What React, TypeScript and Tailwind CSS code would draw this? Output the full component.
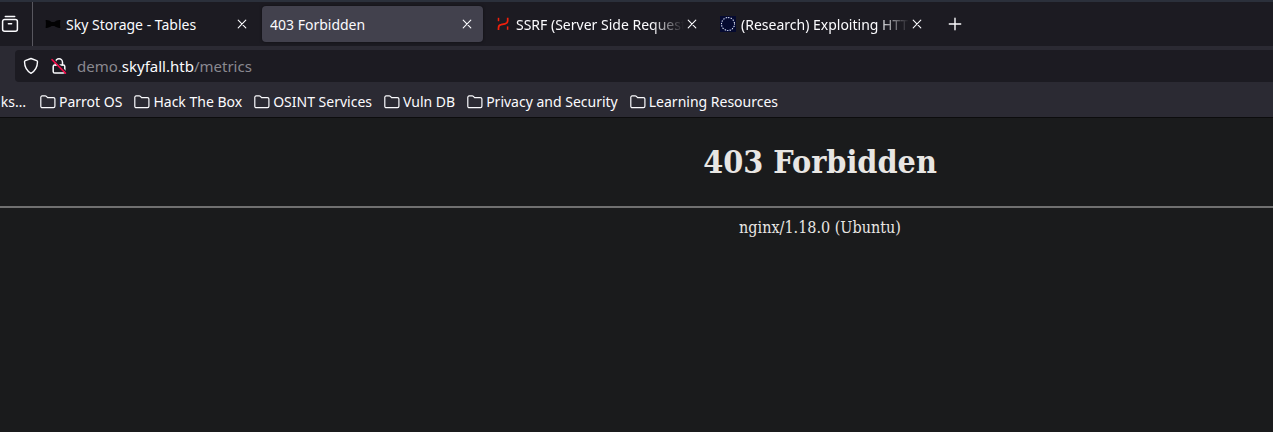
import React from 'react';

const stroke = {
  fill: 'none',
  stroke: 'currentColor',
  strokeLinecap: 'round',
  strokeLinejoin: 'round',
} as const;

function CloseIcon() {
  return (
    <svg viewBox="0 0 16 16" className="size-4" {...stroke} strokeWidth="1.1" aria-hidden="true">
      <path d="M4.2 4.2l7.6 7.6M11.8 4.2l-7.6 7.6" />
    </svg>
  );
}

function RecentIcon() {
  return (
    <svg viewBox="0 0 18 18" className="size-[18px]" {...stroke} strokeWidth="1.5" aria-hidden="true">
      <path d="M4.3 1.6h9.4" />
      <path d="M3.6 4.4h10.8a2 2 0 0 1 2 2v7.8a2 2 0 0 1-2 2H3.6a2 2 0 0 1-2-2V6.4a2 2 0 0 1 2-2z" />
      <path d="M7.4 8.7h3.2" />
    </svg>
  );
}

function BowTie() {
  return (
    <svg viewBox="0 0 16 16" className="size-4" fill="#020203" aria-hidden="true">
      <path d="M.6 4.3C2 3.6 5 4.8 6.600 6h2.800C11 4.800 14 3.600 15.400 4.300c-.4 2.300-.4 5.100 0 7.400-1.400.7-4.400-.5-6-1.700H6.600c-1.600 1.200-4.600 2.400-6 1.700.4-2.300.4-5.100 0-7.400z" />
    </svg>
  );
}

function RedMark() {
  return (
    <svg viewBox="0 0 16 16" className="size-4" fill="none" stroke="#f0200c" aria-hidden="true">
      <path d="M3.5 1.8v3.400" strokeWidth="1.500" />
      <path
        d="M3.500 14v-2c0-2 .8-3.100 2.600-3.400l3.800-.8c1.900-.4 2.800-1.500 2.800-3.300V1.800"
        strokeWidth="1.700"
      />
      <path d="M12.600 13.800v-3.400" strokeWidth="1.500" />
    </svg>
  );
}

function StarCircle() {
  return (
    <svg viewBox="0 0 16 16" className="size-4" aria-hidden="true">
      <rect width="16" height="16" fill="#050a30" />
      <circle cx="8" cy="8" r="6.500" fill="none" stroke="#26336c" strokeWidth="1" />
      <circle
        cx="8"
        cy="8"
        r="6.500"
        fill="none"
        stroke="#ffffff"
        strokeWidth="1.200"
        strokeLinecap="round"
        strokeDasharray="0.010 2.543"
      />
    </svg>
  );
}

function ShieldIcon() {
  return (
    <svg viewBox="0 0 16 18" className="h-[18px] w-4" {...stroke} strokeWidth="1.4" aria-hidden="true">
      <path d="M8 1.500l5.700 2.200c.5.200.8.600.8 1.100-.1 5.200-2 9-6.500 11.500C3.500 13.800 1.600 10 1.500 4.800c0-.5.3-.9.800-1.100z" />
    </svg>
  );
}

function InsecureLockIcon() {
  return (
    <svg viewBox="0 0 16 18" className="h-[18px] w-4" {...stroke} strokeWidth="1.5" aria-hidden="true">
      <path d="M4.500 8V5.200a3.500 3.500 0 0 1 7 0V8" />
      <path d="M3.800 8h8.400a1.600 1.600 0 0 1 1.600 1.600v4.800a1.600 1.600 0 0 1-1.600 1.600H3.800a1.600 1.600 0 0 1-1.600-1.600V9.600A1.600 1.600 0 0 1 3.800 8z" />
      <path d="M2.300 2.200l13 13" stroke="#1c1b22" strokeWidth="1.500" />
      <path d="M1 2.600l13.500 13.500" stroke="#f00a48" strokeWidth="1.500" />
    </svg>
  );
}

function FolderIcon() {
  return (
    <svg viewBox="0 0 16 16" className="size-4 shrink-0" {...stroke} strokeWidth="1.2" aria-hidden="true">
      <path d="M.8 12.300V3.300c0-.8.6-1.400 1.400-1.400h3c.5 0 .9.200 1.200.5l1.200 1.300h5.900c.8 0 1.400.6 1.400 1.400v7.200c0 .8-.6 1.400-1.400 1.400H2.200c-.8 0-1.400-.6-1.400-1.400z" />
    </svg>
  );
}

type TabInfo = { title: string; icon?: React.ReactNode; active?: boolean; fade?: boolean };

const tabs: TabInfo[] = [
  { title: 'Sky Storage - Tables', icon: <BowTie /> },
  { title: '403 Forbidden', active: true },
  { title: 'SSRF (Server Side Request', icon: <RedMark />, fade: true },
  { title: '(Research) Exploiting HTT', icon: <StarCircle />, fade: true },
];

const folders = [
  'Parrot OS',
  'Hack The Box',
  'OSINT Services',
  'Vuln DB',
  'Privacy and Security',
  'Learning Resources',
];

function Tab({ title, icon, active, fade }: TabInfo) {
  return (
    <div
      className={`flex h-9 w-[221px] shrink-0 items-center rounded px-2 ${active ? 'bg-[#42414d] shadow-[0_0_3px_rgba(0,0,0,0.5)]' : ''}`}
    >
      <button
        type="button"
        role="tab"
        aria-selected={!!active}
        className="flex min-w-0 flex-1 items-center gap-[5px] text-left"
      >
        {icon && <span className="shrink-0">{icon}</span>}
        <span
          className={`min-w-0 flex-1 overflow-hidden pt-0.5 whitespace-nowrap ${fade ? '[mask-image:linear-gradient(to_left,transparent,black_32px)]' : ''}`}
        >
          {title}
        </span>
      </button>
      <button type="button" aria-label={`Close ${title}`} className="shrink-0">
        <CloseIcon />
      </button>
    </div>
  );
}

export default function App() {
  return (
    <div className="flex min-h-screen flex-col overflow-hidden bg-[#1a1b1c] font-['Noto_Sans',sans-serif] text-sm leading-5 text-[#fbfbfe]">
      <header className="border-b border-[#0c0c0d] bg-[#2b2a33]">
        <div className="flex h-[46px] items-stretch border-t-2 border-[#2b303b] bg-[#1c1b22]">
          <button type="button" aria-label="Recent browsing" className="flex w-8 shrink-0 items-center pl-px">
            <RecentIcon />
          </button>
          <div className="w-px shrink-0 bg-[#58575f]" />
          <div role="tablist" className="flex items-center gap-1 pl-1">
            {tabs.map((tab) => (
              <Tab key={tab.title} {...tab} />
            ))}
          </div>
          <button type="button" aria-label="New tab" className="ml-3.5 shrink-0">
            <svg viewBox="0 0 16 16" className="size-4" {...stroke} strokeWidth="1.4" aria-hidden="true">
              <path d="M8 2.300v11.400M2.300 8h11.400" />
            </svg>
          </button>
        </div>

        <div className="pt-1 pl-[15px]">
          <div className="flex h-8 items-center rounded-l bg-[#1c1b22] pl-2">
            <button type="button" aria-label="Tracking protection">
              <ShieldIcon />
            </button>
            <button type="button" aria-label="Connection not secure" className="ml-3">
              <InsecureLockIcon />
            </button>
            <a href="#address" className="ml-2.5 text-[15px] text-[#8a8990]">
              demo.<span className="text-[#fbfbfe]">skyfall.htb</span>/metrics
            </a>
          </div>
        </div>

        <nav aria-label="Bookmarks" className="flex h-[35px] items-center gap-3 pt-1 whitespace-nowrap">
          <a href="#bookmarks" className="mr-0.5 flex w-[26px] shrink-0 justify-end">
            ks…
          </a>
          {folders.map((name) => (
            <button key={name} type="button" className="flex shrink-0 items-center gap-[3px]">
              <FolderIcon />
              {name}
            </button>
          ))}
        </nav>
      </header>

      <main className="flex-1 text-center font-['DejaVu_Serif_Condensed','DejaVu_Serif',serif] text-[#e8e6e3]">
        <h1 className="pt-6 pb-6 pl-[367px] text-[32px] leading-10 font-bold">403 Forbidden</h1>
        <hr className="border-t-2 border-[#707070]" />
        <p className="pt-2 pl-[367px] text-base leading-6">nginx/1.18.0 (Ubuntu)</p>
      </main>
    </div>
  );
}
